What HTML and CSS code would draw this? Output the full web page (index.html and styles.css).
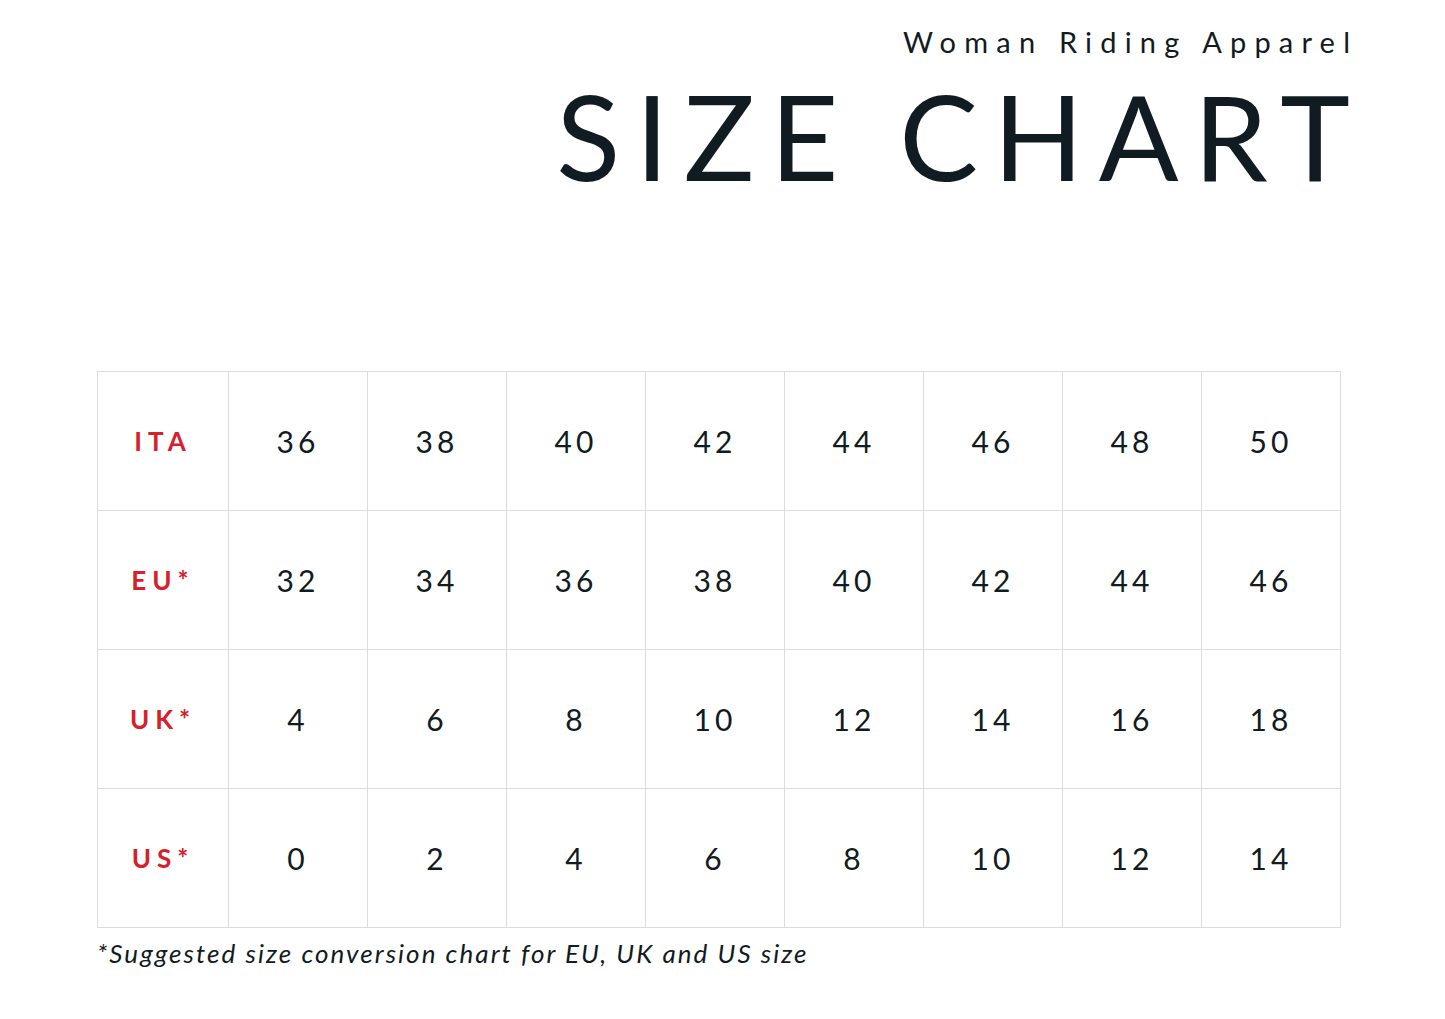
FILE: index.html
```html
<!DOCTYPE html>
<html>
<head>
<meta charset="utf-8">
<link rel="stylesheet" href="styles.css">
</head>
<body>
<div class="page">
  <header class="header">
    <div class="subtitle">Woman Riding Apparel</div>
    <h1 class="title">SIZE CHART</h1>
  </header>
  <table class="chart">
    <tr><th>ITA</th><td>36</td><td>38</td><td>40</td><td>42</td><td>44</td><td>46</td><td>48</td><td>50</td></tr>
    <tr><th>EU*</th><td>32</td><td>34</td><td>36</td><td>38</td><td>40</td><td>42</td><td>44</td><td>46</td></tr>
    <tr><th>UK*</th><td>4</td><td>6</td><td>8</td><td>10</td><td>12</td><td>14</td><td>16</td><td>18</td></tr>
    <tr><th>US*</th><td>0</td><td>2</td><td>4</td><td>6</td><td>8</td><td>10</td><td>12</td><td>14</td></tr>
  </table>
  <p class="note">*Suggested size conversion chart for EU, UK and US size</p>
</div>
</body>
</html>
```

FILE: styles.css
```css
html, body {
  margin: 0;
  padding: 0;
  background: #ffffff;
}
.page {
  width: 1445px;
  height: 1019px;
  font-family: "Lato", "DejaVu Sans", sans-serif;
  color: #111b22;
  box-sizing: border-box;
  padding: 0 95px 0 97px;
}
.header {
  display: flex;
  flex-direction: column;
  align-items: flex-end;
  padding-top: 25px;
}
.subtitle {
  font-size: 29px;
  letter-spacing: 8.2px;
  line-height: 34px;
  margin-right: -8.2px;
}
.title {
  margin: 27px -15.3px 0 0;
  font-weight: 400;
  font-size: 118px;
  line-height: 100px;
  letter-spacing: 15.3px;
}
.chart {
  margin-top: 185px;
  border-collapse: collapse;
  width: 1244px;
  table-layout: fixed;
}
.chart th, .chart td {
  border: 1.5px solid #dcdcdc;
  height: 138px;
  padding: 0;
  text-align: center;
  vertical-align: middle;
}
.chart th {
  width: 130px;
  color: #d6202b;
  font-weight: 700;
  font-size: 26px;
  letter-spacing: 6px;
}
.chart td {
  font-size: 30px;
  font-weight: 400;
  letter-spacing: 4px;
}
.note {
  margin: 9px 0 0 0;
  font-style: italic;
  font-size: 26px;
  letter-spacing: 2.05px;
}
```
